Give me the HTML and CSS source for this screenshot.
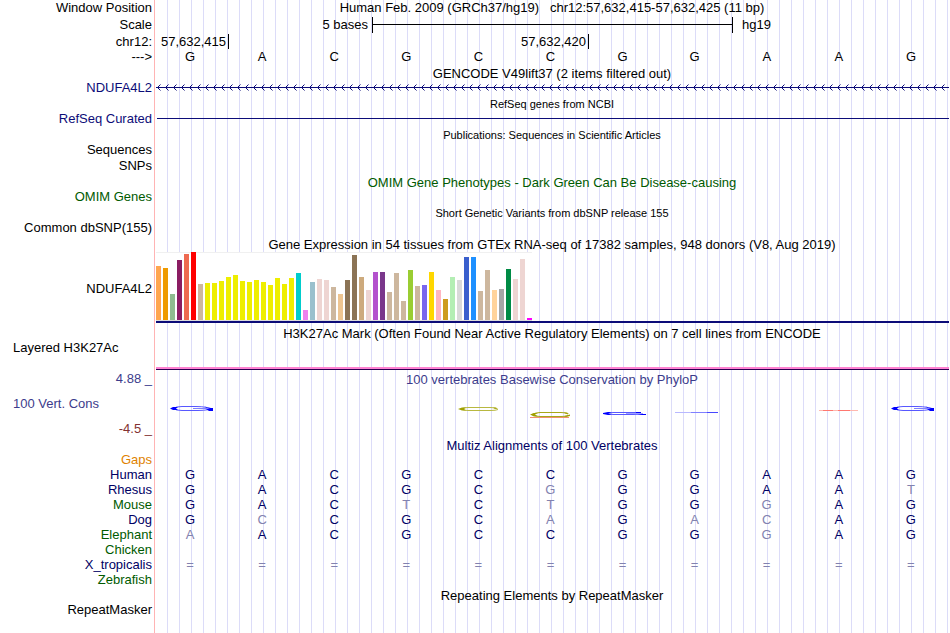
FILE: index.html
```html
<!DOCTYPE html>
<html lang="en">
<head>
<meta charset="utf-8">
<title>chr12:57,632,415-57,632,425 - Genome Browser</title>
<link rel="stylesheet" href="styles.css">
</head>
<body>
<main class="browser">
  <div class="row">
    <div class="label">Window Position</div>
    <h1 class="title">Human Feb. 2009 (GRCh37/hg19)   chr12:57,632,415-57,632,425 (11 bp)</h1>
  </div>
  <div class="row">
    <div class="label">Scale</div>
    <div class="ruler">
      <span class="scale-size">5 bases</span>
      <span class="scale-bar"></span>
      <span class="scale-db">hg19</span>
    </div>
  </div>
  <div class="row tight">
    <div class="label">chr12:</div>
    <div class="ruler">
      <span class="tick">57,632,415</span>
      <span class="tick tick-mid">57,632,420</span>
    </div>
  </div>
  <div class="row">
    <div class="label">---&gt;</div>
    <div class="bases"><span>G</span><span>A</span><span>C</span><span>G</span><span>C</span><span>C</span><span>G</span><span>G</span><span>A</span><span>A</span><span>G</span></div>
  </div>

  <h2 class="title head">GENCODE V49lift37 (2 items filtered out)</h2>
  <div class="row navy">
    <div class="label">NDUFA4L2</div>
    <svg class="gene" aria-hidden="true">
      <defs>
        <pattern id="strand" x="0" y="0" width="8" height="15" patternUnits="userSpaceOnUse">
          <path d="M4.5 4.5L1.5 7.5L4.5 10.5" fill="none" stroke="#0c0c78"/>
        </pattern>
      </defs>
      <rect width="100%" height="15" fill="url(#strand)"/>
      <rect y="7" width="100%" height="1" fill="#0c0c78"/>
    </svg>
  </div>

  <h2 class="title head small">RefSeq genes from NCBI</h2>
  <div class="row navy">
    <div class="label">RefSeq Curated</div>
    <svg class="gene" aria-hidden="true"><rect x="1" y="7" width="100%" height="1" fill="#0c0c78"/></svg>
  </div>

  <h2 class="title head small">Publications: Sequences in Scientific Articles</h2>
  <div class="row snug"><div class="label">Sequences</div></div>
  <div class="row"><div class="label">SNPs</div></div>

  <h2 class="title head green">OMIM Gene Phenotypes - Dark Green Can Be Disease-causing</h2>
  <div class="row green"><div class="label">OMIM Genes</div></div>

  <h2 class="title head small">Short Genetic Variants from dbSNP release 155</h2>
  <div class="row"><div class="label">Common dbSNP(155)</div></div>

  <h2 class="title head">Gene Expression in 54 tissues from GTEx RNA-seq of 17382 samples, 948 donors (V8, Aug 2019)</h2>
  <div class="row expression">
    <div class="label">NDUFA4L2</div>
    <div class="gtex">
      <div class="bars">
        <i style="height:54px;background:#ffa54f"></i>
        <i style="height:52px;background:#ee9a00"></i>
        <i style="height:26px;background:#8fbc8f"></i>
        <i style="height:60px;background:#8b1c62"></i>
        <i style="height:66px;background:#ee6a50"></i>
        <i style="height:68px;background:#ff0000"></i>
        <i style="height:36px;background:#cdb79e"></i>
        <i style="height:37px;background:#eeee00"></i>
        <i style="height:37px;background:#eeee00"></i>
        <i style="height:39px;background:#eeee00"></i>
        <i style="height:43px;background:#eeee00"></i>
        <i style="height:45px;background:#eeee00"></i>
        <i style="height:39px;background:#eeee00"></i>
        <i style="height:38px;background:#eeee00"></i>
        <i style="height:40px;background:#eeee00"></i>
        <i style="height:38px;background:#eeee00"></i>
        <i style="height:35px;background:#eeee00"></i>
        <i style="height:42px;background:#eeee00"></i>
        <i style="height:36px;background:#eeee00"></i>
        <i style="height:42px;background:#eeee00"></i>
        <i style="height:47px;background:#00cdcd"></i>
        <i style="height:10px;background:#ee82ee"></i>
        <i style="height:38px;background:#9ac0cd"></i>
        <i style="height:41px;background:#eed5d2"></i>
        <i style="height:40px;background:#eed5d2"></i>
        <i style="height:33px;background:#cdb79e"></i>
        <i style="height:26px;background:#eec591"></i>
        <i style="height:40px;background:#8b7355"></i>
        <i style="height:65px;background:#8b7355"></i>
        <i style="height:43px;background:#cdaa7d"></i>
        <i style="height:30px;background:#eed5d2"></i>
        <i style="height:48px;background:#b452cd"></i>
        <i style="height:48px;background:#7a378b"></i>
        <i style="height:28px;background:#cdb79e"></i>
        <i style="height:47px;background:#cdb79e"></i>
        <i style="height:19px;background:#cdb79e"></i>
        <i style="height:50px;background:#9acd32"></i>
        <i style="height:34px;background:#cdb79e"></i>
        <i style="height:35px;background:#7a67ee"></i>
        <i style="height:48px;background:#ffd700"></i>
        <i style="height:30px;background:#ffb6c1"></i>
        <i style="height:21px;background:#cd9b1d"></i>
        <i style="height:43px;background:#b4eeb4"></i>
        <i style="height:40px;background:#d9d9d9"></i>
        <i style="height:63px;background:#3a5fcd"></i>
        <i style="height:63px;background:#1e90ff"></i>
        <i style="height:29px;background:#cdb79e"></i>
        <i style="height:50px;background:#cdb79e"></i>
        <i style="height:30px;background:#ffd39b"></i>
        <i style="height:31px;background:#a6a6a6"></i>
        <i style="height:51px;background:#008b45"></i>
        <i style="height:41px;background:#eed5d2"></i>
        <i style="height:61px;background:#eed5d2"></i>
        <i style="height:2px;background:#ff00ff"></i>
      </div>
    </div>
  </div>

  <h2 class="title head">H3K27Ac Mark (Often Found Near Active Regulatory Elements) on 7 cell lines from ENCODE</h2>
  <div class="row layered">
    <div class="label start">Layered H3K27Ac</div>
    <div class="signal"></div>
  </div>

  <div class="row phylop">
    <div class="axis">
      <span class="label">4.88 _</span>
      <span class="label start">100 Vert. Cons</span>
      <span class="label low">-4.5 _</span>
    </div>
    <div class="conservation">
      <h2 class="title">100 vertebrates Basewise Conservation by PhyloP</h2>
      <div class="bases logos" aria-hidden="true">
        <svg class="c1" viewBox="0 0 60 30"><use href="#wide-g"/>
          <defs>
            <g id="wide-g">
              <path d="M47 15.5Q42 14.5 36 14.5H22Q16 14.5 13 16.5Q16 18.500 22 18.500H38Q44 18.500 49 17.500" fill="none" stroke="#5858ff"/>
              <path d="M33 16.500H50" stroke="#8080ff"/>
              <path d="M10 16.500L13 15H18L16 16.500L18 18H13ZM44 14.500L51 16H53V19H49L46 17H50Z" fill="#0000ff"/>
            </g>
          </defs>
        </svg>
        <svg class="c5" viewBox="0 0 60 30">
          <path d="M48 16.500Q46 15.500 42 15.500H20Q16 15.500 13 17Q16 18.500 20 18.500H42Q48 18.500 50 17.500" fill="none" stroke="#b8b840"/>
          <path d="M10 17L14 15.500H18L16 17L18 18.500H14ZM45 15.500H48L50 17L46 16.500Z" fill="#a0a000"/>
        </svg>
        <svg class="c6" viewBox="0 0 60 30">
          <path d="M48 22Q46 20.500 41 20.500H20Q16 20.500 12 22.500Q16 24.500 20 24.500H41Q47 24.500 50 23.500" fill="none" stroke="#a8a818"/>
          <path d="M10 22.500L14 21H18L15 22.500L18 24.500H14ZM44 20.500H47L49 22L45 21.500ZM44 24L50 22.500V23.500L46 25Z" fill="#a0a000"/>
          <path d="M10 25.500H49" stroke="#f09070"/>
        </svg>
        <svg class="c7" viewBox="0 0 60 30">
          <path d="M46 20.500H20L13 21.500L20 22.500H40L50 22" fill="none" stroke="#5858ff"/>
          <path d="M33 21.500H50" stroke="#a0a0ff"/>
          <path d="M10 21L15 20H19L15 21.500L19 23H15L10 22ZM43 20H48V21H43ZM44 22H53V23H49Z" fill="#0000ff"/>
        </svg>
        <svg class="c8" viewBox="0 0 60 30">
          <path d="M10 20.500H26" stroke="#b8b8ff"/><path d="M26 20.500H42" stroke="#8080ff"/><path d="M42 20.500H53" stroke="#4848ff"/>
        </svg>
        <svg class="c10" viewBox="0 0 60 30">
          <path d="M10 18.500H49" stroke="#ffb8b0"/><path d="M14 18.500H24M29 18.500H41" stroke="#ff7870"/>
        </svg>
        <svg class="c11" viewBox="0 0 60 30"><use href="#wide-g"/></svg>
      </div>
    </div>
  </div>

  <h2 class="title head navy-text">Multiz Alignments of 100 Vertebrates</h2>
  <table class="alignment">
    <colgroup><col class="name-col"><col span="11"><col class="edge-col"></colgroup>
    <tbody>
      <tr class="gaps"><th scope="row">Gaps</th></tr>
      <tr><th scope="row">Human</th><td>G</td><td>A</td><td>C</td><td>G</td><td>C</td><td>C</td><td>G</td><td>G</td><td>A</td><td>A</td><td>G</td><td></td></tr>
      <tr><th scope="row">Rhesus</th><td>G</td><td>A</td><td>C</td><td>G</td><td>C</td><td class="diff">G</td><td>G</td><td>G</td><td>A</td><td>A</td><td class="diff">T</td><td></td></tr>
      <tr class="alt"><th scope="row">Mouse</th><td>G</td><td>A</td><td>C</td><td class="diff">T</td><td>C</td><td class="diff">T</td><td>G</td><td>G</td><td class="diff">G</td><td>A</td><td>G</td><td></td></tr>
      <tr><th scope="row">Dog</th><td>G</td><td class="diff">C</td><td>C</td><td>G</td><td>C</td><td class="diff">A</td><td>G</td><td class="diff">A</td><td class="diff">C</td><td>A</td><td>G</td><td></td></tr>
      <tr class="alt"><th scope="row">Elephant</th><td class="diff">A</td><td>A</td><td>C</td><td>G</td><td>C</td><td>C</td><td>G</td><td>G</td><td class="diff">G</td><td>A</td><td>G</td><td></td></tr>
      <tr class="alt"><th scope="row">Chicken</th></tr>
      <tr class="unaligned"><th scope="row">X_tropicalis</th><td>=</td><td>=</td><td>=</td><td>=</td><td>=</td><td>=</td><td>=</td><td>=</td><td>=</td><td>=</td><td>=</td><td></td></tr>
      <tr class="alt"><th scope="row">Zebrafish</th></tr>
    </tbody>
  </table>

  <h2 class="title head">Repeating Elements by RepeatMasker</h2>
  <div class="row"><div class="label">RepeatMasker</div></div>
</main>
</body>
</html>
```
FILE: styles.css
```css
:root {
  --label-width: 154px;
  --navy: #0c0c78;
  --deep-navy: #000064;
  --green: #005a00;
}

* { box-sizing: border-box; }

body {
  margin: 0;
  background: #fff;
  color: #000;
  font: 13px/15px "Liberation Sans", Arial, Helvetica, sans-serif;
}

/* Red divider after the labels, then a guide line every 12px. */
.browser {
  min-height: 100vh;
  overflow: hidden;
  background:
    linear-gradient(#ffb4b4, #ffb4b4) 154px 0 / 1px 100% no-repeat,
    repeating-linear-gradient(90deg, #dcdcf8 0 1px, transparent 1px 12px) 167px 0 / 100% 100% no-repeat;
}

.row {
  display: grid;
  grid-template-columns: var(--label-width) minmax(0, 1fr);
  height: 17px;
}
.row.tight { height: 15px; }
.row.snug { height: 16px; }

.label {
  padding-right: 2px;
  text-align: right;
  white-space: nowrap;
}
.label.start {
  padding-left: 13px;
  text-align: left;
}

.title {
  margin: 0;
  font-size: 13px;
  font-weight: normal;
  line-height: 15px;
  text-align: center;
  white-space: pre;
}
.title.head {
  height: 14px;
  margin-left: var(--label-width);
}
.title.small { font-size: 11px; line-height: 14px; }

.navy { color: var(--navy); }
.navy-text { color: var(--deep-navy); }
.green { color: var(--green); }

.ruler,
.bases {
  display: grid;
  grid-template-columns: repeat(11, minmax(0, 1fr));
  white-space: nowrap;
}
.ruler { padding: 0 2px; }
.bases {
  padding-right: 3px;
  text-align: center;
}

.scale-size {
  grid-column: 1 / 4;
  padding-right: 4px;
  text-align: right;
}
.scale-bar {
  grid-column: 4 / 9;
  height: 16px;
  margin-right: -1px;
  border: solid #000;
  border-width: 0 1px;
  background: linear-gradient(#000, #000) 0 7px / 100% 1px no-repeat;
}
.scale-db { grid-column: 9 / 12; padding-left: 10px; }

.tick {
  grid-column: 1;
  margin-right: -1px;
  padding-right: 2px;
  border-right: 1px solid #000;
  text-align: right;
}
.tick-mid { grid-column: 6; }

.gene {
  display: block;
  width: calc(100% - 3px);
  height: 15px;
  margin-left: 2px;
}

.expression { height: 75px; }
.expression .label { align-self: center; }
.gtex {
  height: 71px;
  margin: 1px 1px 0 2px;
  border-bottom: 2px solid var(--navy);
}
.bars {
  display: flex;
  align-items: flex-end;
  gap: 2px;
  width: max-content;
  height: 69px;
  border-bottom: 1px solid #dcdcdc;
  background: linear-gradient(#f0f0f0, #f0f0f0) 0 0 / 100% 1px no-repeat, #fff;
}
.bars i { width: 5px; }

.layered { height: 31px; }
.signal {
  align-self: end;
  height: 3px;
  margin: 0 1px 1px 2px;
  border-bottom: 1px solid #280050;
  background: #ff82d2;
}

.phylop { height: 67px; color: #3c3c8c; }
.axis {
  display: flex;
  flex-direction: column;
  gap: 10px;
}
.low { color: #823232; }
.conservation { padding-top: 1px; }
.logos { padding-top: 5px; }
.logos svg {
  width: 60px;
  height: 30px;
  justify-self: center;
  grid-row: 1;
}
.c1 { grid-column: 1; }
.c5 { grid-column: 5; }
.c6 { grid-column: 6; }
.c7 { grid-column: 7; }
.c8 { grid-column: 8; }
.c10 { grid-column: 10; }
.c11 { grid-column: 11; }

.alignment {
  width: 100%;
  margin-bottom: 1px;
  table-layout: fixed;
  border-collapse: collapse;
  color: var(--deep-navy);
}
.name-col { width: 154px; }
.edge-col { width: 3px; }
.alignment th,
.alignment td {
  height: 15px;
  padding: 0;
  font-weight: normal;
  text-align: center;
}
.alignment th {
  padding-right: 2px;
  text-align: right;
}
.gaps th { color: #e08200; }
.alignment .alt th { color: var(--green); }
.alignment .diff,
.unaligned td { color: #8282af; }
```
